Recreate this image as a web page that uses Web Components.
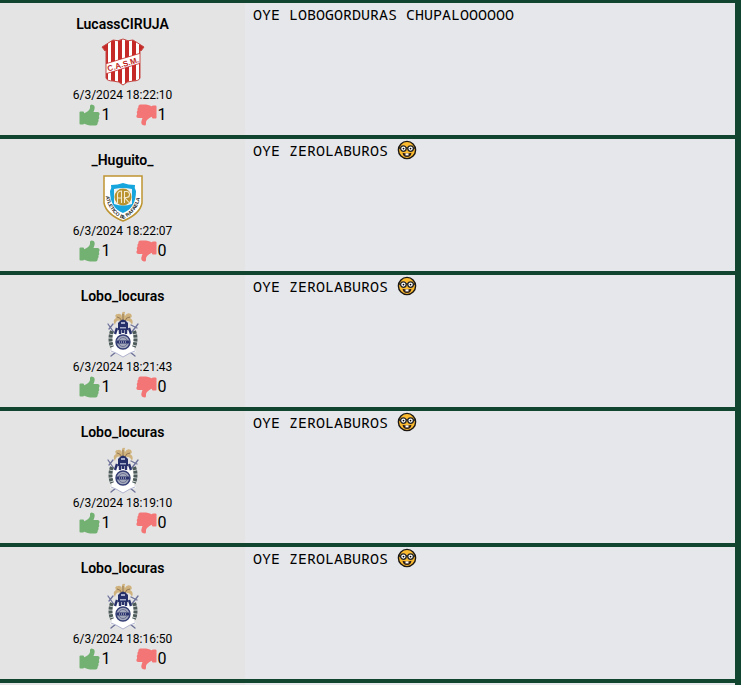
<!DOCTYPE html>
<html lang="es">
<head>
<meta charset="utf-8">
<title>Comentarios</title>
<style>
body{margin:0;background:#12452f;color:#000;font-family:Roboto,"Liberation Sans",sans-serif}
</style>
</head>
<body>
<comment-feed>
<comment-row author="LucassCIRUJA" time="6/3/2024 18:22:10" crest="casm" up="1" down="1">OYE LOBOGORDURAS CHUPALOOOOOO</comment-row>
<comment-row author="_Huguito_" time="6/3/2024 18:22:07" crest="rafaela" up="1" down="0">OYE ZEROLABUROS <nerd-face></nerd-face></comment-row>
<comment-row author="Lobo_locuras" time="6/3/2024 18:21:43" crest="lobo" up="1" down="0">OYE ZEROLABUROS <nerd-face></nerd-face></comment-row>
<comment-row author="Lobo_locuras" time="6/3/2024 18:19:10" crest="lobo" up="1" down="0">OYE ZEROLABUROS <nerd-face></nerd-face></comment-row>
<comment-row author="Lobo_locuras" time="6/3/2024 18:16:50" crest="lobo" up="1" down="0">OYE ZEROLABUROS <nerd-face></nerd-face></comment-row>
<feed-end></feed-end>
</comment-feed>

<script>
const CRESTS = {
casm: `<svg viewBox="0 0 44 48" role="img" aria-label="Escudo San Martín">
<defs><clipPath id="s"><path d="M12 2Q17 4 22 1Q27 4 32 2L43 9L40 13L39 12V40Q38 43 32 43Q26 43 22 47Q18 43 12 43Q6 43 5 40V12L4 13L1 9Z"/></clipPath></defs>
<g clip-path="url(#s)"><path fill="#fff" d="M0 0h44v48H0z"/>
<path fill="#c62a28" d="M0 0h7v48H0zM10 0h4v48h-4zM17 0h4v48h-4zM24 0h4v48h-4zM31 0h4v48h-4zM38 0h6v48h-6z"/>
<path d="M4 26L40 15V25L4 36Z" fill="#fff" stroke="#c62a28" stroke-width=".8"/></g>
<path fill="none" stroke="#c34743" d="M12 2Q17 4 22 1Q27 4 32 2L43 9L40 13L39 12V40Q38 43 32 43Q26 43 22 47Q18 43 12 43Q6 43 5 40V12L4 13L1 9Z"/>
<text x="22" y="29" text-anchor="middle" transform="rotate(-17 22 26)" font-family="Liberation Sans,sans-serif" font-weight="700" font-size="8" fill="#bd1f1c">C.A.S.M.</text></svg>`,
rafaela: `<svg viewBox="0 0 44 48" role="img" aria-label="Escudo Atlético de Rafaela">
<path d="M3 2H41V29Q39 40 22 47Q5 40 3 29Z" fill="#fff" stroke="#bd9430" stroke-width="1.5"/>
<path d="M10 11Q17 11 22 9Q27 11 34 11Q33 14 35 17Q35 34 22 39Q9 34 9 17Q11 14 10 11Z" fill="#16a5dc"/>
<path d="M13 15Q22 13 31 15V30Q22 33 13 30Z" fill="#eef4f5"/>
<circle cx="22" cy="23" r="8.500" fill="#b8922c"/>
<path d="M16.500 29V21Q16.500 17 20.500 17V29M16.500 24h4M23.500 29V17.500h2q3 0 3 3t-3 3h-2l4.500 5" fill="none" stroke="#f4ead0" stroke-width="1.100"/>
<path id="p" d="M4.500 19Q6 38 22 45Q38 38 39.500 19" fill="none"/>
<text font-family="Liberation Sans,sans-serif" font-size="5" font-weight="700" fill="#222"><textPath href="#p" startOffset="3">ATLETICO DE RAFAELA</textPath></text></svg>`,
lobo: `<svg viewBox="0 0 44 48" role="img" aria-label="Escudo Gimnasia">
<path d="M20 11Q15 9 14 15Q11 10 15 8Q13 4 17 4Q20 3 21 7Q20 1 24 2Q23 4 24 6Q26 2 30 4Q32 7 29 8Q33 10 31 15Q29 10 24 11Z" fill="#cfb27d"/>
<path d="M16 7Q19 7 21 11M29 7Q25 7 24 11M22 4V10" fill="none" stroke="#8b7251" stroke-width=".900"/>
<g fill="none" stroke-linecap="round"><path d="M7 14L14 24M12 14L8 19M37 14L30 23M30 15L36 18M15 42L10 46M29 42L34 46" stroke="#6c7199" stroke-width="1.300"/></g>
<path d="M17 13Q22 6 27 13V20H17Z" fill="#252f69"/><path d="M20 12h4v2h-4zM19 17h6v1.500h-6z" fill="#a4abc8"/>
<path d="M11 23L16 21L22 23L28 21L33 23V39L35 42L29 43L22 47L15 43L9 42L11 39Z" fill="#fff"/>
<path d="M10 41L15 43L22 47L29 43L34 41" fill="none" stroke="#a8accb" stroke-width=".900"/>
<path d="M16 18L14 24M28 18L30 24M19 20V24M22 19V23M25 20V24" stroke="#28316b" stroke-width="2.400"/>
<circle cx="22" cy="32" r="7" fill="#a4a9bc" stroke="#343d74" stroke-width="1.400"/><circle cx="22" cy="32" r="4.500" fill="none" stroke="#6d7495"/>
<path d="M15.500 32h13" stroke="#2a336d" stroke-width="3"/><path d="M18 32h8" stroke="#d8dae3" stroke-dasharray="1 1"/>
<g fill="none" stroke="#4c5b59" stroke-width="4" stroke-dasharray="3 .8"><path d="M11 21Q8 29 11 37M33 21Q36 29 33 37"/></g></svg>`
};

function define(name, render) {
  customElements.define(name, class extends HTMLElement {
    constructor() { super(); this.attachShadow({mode: 'open'}); }
    connectedCallback() { this.shadowRoot.innerHTML = render(this); }
  });
}

define('comment-feed', () => `<style>
:host{display:block;padding:3px 6px 0 0}
main{display:grid;gap:4px}
</style><main><slot></slot></main>`);

define('feed-end', () => `<style>
:host{display:grid;grid-template-columns:1fr 2fr;height:2px}
.side{background:#e4e4e4}
.body{background:#e6e7eb}
</style><div class="side"></div><div class="body"></div>`);

define('team-crest', el => `<style>
:host{display:block;width:44px;height:48px}
svg{display:block;width:100%;height:100%}
</style>${CRESTS[el.getAttribute('name')]}`);

define('vote-button', el => {
  const down = el.hasAttribute('down');
  return `<style>
:host{display:block}
button{display:flex;align-items:center;gap:${down ? 1 : 2}px;border:0;padding:0;background:none;font:16px/20px Roboto,sans-serif;color:#000;cursor:pointer}
svg{display:block;width:21px;height:22px;fill:#72b172}
.down{fill:#f37575;transform:rotate(180deg)}
</style><button type="button" aria-label="${down ? 'No me gusta' : 'Me gusta'} ${el.getAttribute('count')}">
<svg class="${down ? 'down' : ''}" viewBox="0 0 21 22" aria-hidden="true"><path d="M.5 8.300Q.5 7.500 1.500 7.500H4Q5 7.500 5 8.500V19.500Q5 20.500 4 20.500H1.500Q.5 20.500 .5 19.500ZM4.600 9.500Q10.500 7 11 4V2Q11 .5 12.500.5Q16.500.8 15.500 5L14.500 8H18.500Q21 8 20.500 10.500L19.800 12L20.300 14L19.400 15.500L19.600 17.300L18.700 18.500Q18.800 21.500 16.500 21.500H11Q8 21 4.600 19.500Z"/></svg><span>${el.getAttribute('count')}</span></button>`;
});

define('nerd-face', () => `<style>
:host{display:inline-block;vertical-align:top}
svg{display:block;width:20px;height:20px}
</style><svg viewBox="0 0 20 20" role="img" aria-label="Cara con lentes">
<circle cx="10" cy="10" r="8.600" fill="#fdbb30" stroke="#1b1712" stroke-width="1.400"/>
<path d="M2 8H3.500M9 8H11M16.500 8H18" stroke="#222" stroke-width="1.500"/>
<circle cx="6.400" cy="8.600" r="2.800" fill="#fff" stroke="#222" stroke-width="1.300"/><circle cx="13.600" cy="8.600" r="2.800" fill="#fff" stroke="#222" stroke-width="1.300"/>
<circle cx="6.500" cy="8.600" r=".900"/><circle cx="13.500" cy="8.600" r=".900"/>
<path d="M5.500 12.800Q10 14 14.500 12.800Q14 17 10 17Q6 17 5.500 12.800Z" fill="#30201a"/><path d="M8.500 13.400h3v2h-3z" fill="#fff"/></svg>`);

define('comment-row', el => {
  const a = n => el.getAttribute(n);
  return `<style>
:host{display:block}
article{display:grid;grid-template-columns:1fr 2fr;min-height:132px}
.user{display:flex;flex-direction:column;align-items:center;background:#e4e4e4;padding-top:13px}
h2{font-size:14px;line-height:16px;font-weight:600;margin:0 0 6px}
time{font-size:12px;line-height:14px;margin-top:2px}
.votes{display:flex;gap:25px;margin-top:2px}
.text{background:#e6e7eb;padding:1px 8px;font:15px/20px "Noto Sans Mono","DejaVu Sans Mono",monospace;margin:0}
</style><article><section class="user"><h2>${a('author')}</h2><team-crest name="${a('crest')}"></team-crest><time>${a('time')}</time>
<div class="votes"><vote-button count="${a('up')}"></vote-button><vote-button down count="${a('down')}"></vote-button></div></section>
<p class="text"><slot></slot></p></article>`;
});
</script>
</body>
</html>
